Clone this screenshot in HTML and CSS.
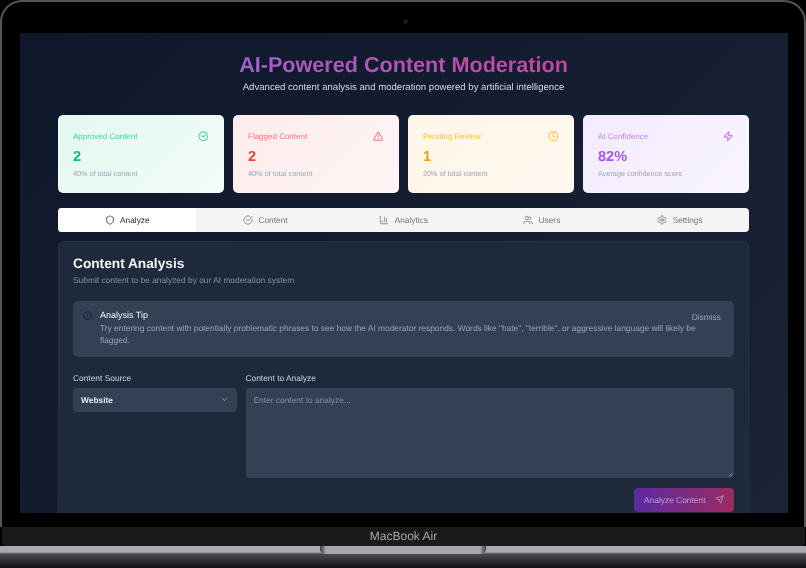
FILE: index.html
```html
<!DOCTYPE html>
<html lang="en">
<head>
<meta charset="utf-8">
<title>AI-Powered Content Moderation</title>
<link rel="stylesheet" href="styles.css">
</head>
<body>
<div class="laptop">
  <div class="lid">
    <span class="camera"></span>
    <main class="screen">
      <header class="hero">
        <h1>AI-Powered Content Moderation</h1>
        <p>Advanced content analysis and moderation powered by artificial intelligence</p>
      </header>
      <section class="stats">
        <article class="stat green">
          <div class="stat-head"><span>Approved Content</span>
            <svg viewBox="0 0 24 24"><path d="M21.8 10A10 10 0 1 1 17 3.3"/><path d="m9 11 3 3L22 4"/></svg></div>
          <strong>2</strong><small>40% of total content</small>
        </article>
        <article class="stat red">
          <div class="stat-head"><span>Flagged Content</span>
            <svg viewBox="0 0 24 24"><path d="m21.7 18-8-14a2 2 0 0 0-3.5 0l-8 14A2 2 0 0 0 4 21h16a2 2 0 0 0 1.7-3"/><path d="M12 9v4"/><path d="M12 17h.01"/></svg></div>
          <strong>2</strong><small>40% of total content</small>
        </article>
        <article class="stat amber">
          <div class="stat-head"><span>Pending Review</span>
            <svg viewBox="0 0 24 24"><circle cx="12" cy="12" r="10"/><path d="M12 6v6l4 2"/></svg></div>
          <strong>1</strong><small>20% of total content</small>
        </article>
        <article class="stat purple">
          <div class="stat-head"><span>AI Confidence</span>
            <svg viewBox="0 0 24 24"><path d="M4 14a1 1 0 0 1-.8-1.6l9.9-10.2a.5.5 0 0 1 .9.5l-1.9 6A1 1 0 0 0 13 10h7a1 1 0 0 1 .8 1.6l-9.9 10.2a.5.5 0 0 1-.9-.5l1.9-6A1 1 0 0 0 11 14z"/></svg></div>
          <strong>82%</strong><small>Average confidence score</small>
        </article>
      </section>
      <nav class="tabs">
        <div class="tab active"><svg viewBox="0 0 24 24"><path d="M20 13c0 5-3.5 7.500-7.700 9a1 1 0 0 1-.6 0C7.500 20.500 4 18 4 13V6a1 1 0 0 1 1-1c2 0 4.500-1.200 6.200-2.700a1.200 1.200 0 0 1 1.600 0C14.500 3.800 17 5 19 5a1 1 0 0 1 1 1z"/></svg>Analyze</div>
        <div class="tab"><svg viewBox="0 0 24 24"><path d="M21.8 10A10 10 0 1 1 17 3.300"/><path d="m9 11 3 3L22 4"/></svg>Content</div>
        <div class="tab"><svg viewBox="0 0 24 24"><path d="M3 3v16a2 2 0 0 0 2 2h16"/><path d="M8 17v-3"/><path d="M13 17V5"/><path d="M18 17V9"/></svg>Analytics</div>
        <div class="tab"><svg viewBox="0 0 24 24"><path d="M16 21v-2a4 4 0 0 0-4-4H6a4 4 0 0 0-4 4v2"/><circle cx="9" cy="7" r="4"/><path d="M22 21v-2a4 4 0 0 0-3-3.900"/><path d="M16 3.100a4 4 0 0 1 0 7.800"/></svg>Users</div>
        <div class="tab"><svg viewBox="0 0 24 24"><path d="M12.200 2h-.4a2 2 0 0 0-2 2v.2a2 2 0 0 1-1 1.700l-.4.300a2 2 0 0 1-2 0l-.2-.1a2 2 0 0 0-2.700.7l-.2.400a2 2 0 0 0 .7 2.700l.2.100a2 2 0 0 1 1 1.700v.5a2 2 0 0 1-1 1.700l-.2.100a2 2 0 0 0-.7 2.700l.2.400a2 2 0 0 0 2.700.7l.2-.1a2 2 0 0 1 2 0l.4.300a2 2 0 0 1 1 1.700v.2a2 2 0 0 0 2 2h.4a2 2 0 0 0 2-2v-.2a2 2 0 0 1 1-1.700l.4-.3a2 2 0 0 1 2 0l.2.100a2 2 0 0 0 2.700-.7l.2-.4a2 2 0 0 0-.7-2.700l-.2-.1a2 2 0 0 1-1-1.700v-.5a2 2 0 0 1 1-1.700l.2-.1a2 2 0 0 0 .7-2.700l-.2-.4a2 2 0 0 0-2.700-.7l-.2.100a2 2 0 0 1-2 0l-.4-.3a2 2 0 0 1-1-1.700V4a2 2 0 0 0-2-2z"/><circle cx="12" cy="12" r="3"/></svg>Settings</div>
      </nav>
      <section class="panel">
        <h2>Content Analysis</h2>
        <p class="lead">Submit content to be analyzed by our AI moderation system</p>
        <div class="tip">
          <svg viewBox="0 0 24 24"><circle cx="12" cy="12" r="10"/><path d="M12 16v-4"/><path d="M12 8h.01"/></svg>
          <div class="tip-body">
            <h3>Analysis Tip</h3>
            <p>Try entering content with potentially problematic phrases to see how the AI moderator responds. Words like "hate", "terrible", or aggressive language will likely be flagged.</p>
          </div>
          <span class="dismiss">Dismiss</span>
        </div>
        <div class="form">
          <div class="field source">
            <label>Content Source</label>
            <div class="select">Website<svg viewBox="0 0 24 24"><path d="m6 9 6 6 6-6"/></svg></div>
          </div>
          <div class="field grow">
            <label>Content to Analyze</label>
            <div class="textarea">Enter content to analyze...<svg viewBox="0 0 10 10"><path d="M9 3 3 9M9 6 6 9"/></svg></div>
          </div>
        </div>
        <div class="actions">
          <div class="button">Analyze Content<svg viewBox="0 0 24 24"><path d="M14.500 21.700a.5.5 0 0 0 .9 0l6.500-19a.5.5 0 0 0-.6-.6l-19 6.500a.5.5 0 0 0 0 .9l7.900 3.200a2 2 0 0 1 1.100 1.100z"/><path d="m21.900 2.100-10.900 10.900"/></svg></div>
        </div>
      </section>
    </main>
  </div>
  <div class="hinge">MacBook Air</div>
  <div class="base"><span class="notch"></span></div>
</div>
</body>
</html>
```

FILE: styles.css
```css
* { box-sizing: border-box; }
html, body { margin: 0; height: 568px; overflow: hidden; background: #000; }
body { font-family: "Liberation Sans", Arial, sans-serif; color: #fff; text-rendering: geometricPrecision; }
svg { fill: none; stroke: currentColor; stroke-width: 2; stroke-linecap: round; stroke-linejoin: round; flex: none; }

.laptop { width: 806px; height: 568px; display: flex; flex-direction: column; background: #000; filter: blur(.55px); }
.lid {
  position: relative; flex: none; height: 527px; padding: 31px 16px 14px 17.500px;
  background: #000; border: 2px solid #55565a; border-bottom: 0; border-radius: 22px 22px 0 0;
}
.camera { position: absolute; left: 401px; top: 17px; width: 5px; height: 5px; border-radius: 50%; background: #17181c; }
.screen { height: 480px; overflow: hidden; background: linear-gradient(135deg, #0f172a, #1a2436); padding: 19px 39px 0 38.500px; }

.hero { text-align: center; }
h1 { width: fit-content; margin: 0 auto; font-size: 21.600px; line-height: 26px; font-weight: 700; color: transparent; background: linear-gradient(90deg, #a460cc, #c2459f); background-clip: text; -webkit-background-clip: text; }
.hero p { margin: 3px 0 0; font-size: 9.600px; line-height: 14px; color: #d3d7de; }

.stats { display: grid; grid-template-columns: repeat(4, 165.750px); gap: 9.250px; margin-top: 20px; }
.stat { height: 77.500px; border-radius: 5px; padding: 15.500px 15px 0; display: flex; flex-direction: column; }
.stat-head { display: flex; justify-content: space-between; align-items: center; font-size: 8px; line-height: 12px; }
.stat-head svg { width: 10.500px; height: 10.500px; stroke-width: 2.300; }
.stat strong { font-size: 14.500px; line-height: 20px; margin-top: 4px; font-weight: 700; }
.stat small { font-size: 7.300px; line-height: 10px; margin-top: 2px; color: #9ca3b4; }
.green { background: linear-gradient(135deg, #e4f9f0, #f2fbf8); }
.green .stat-head { color: #3dd598; } .green strong { color: #10b981; }
.red { background: linear-gradient(135deg, #fdecec, #fff5f5); }
.red .stat-head { color: #f8717f; } .red strong { color: #ef4444; }
.amber { background: linear-gradient(135deg, #fef5e7, #fff9f0); }
.amber .stat-head { color: #fbbf3c; } .amber strong { color: #f59e0b; }
.purple { background: linear-gradient(135deg, #f3ebff, #f9f5ff); }
.purple .stat-head { color: #c084fc; } .purple strong { color: #a855f7; }

.tabs { display: grid; grid-template-columns: repeat(5, 1fr); height: 24px; margin-top: 15px; background: #f4f4f5; border-radius: 4px; overflow: hidden; }
.tab { display: flex; align-items: center; justify-content: center; gap: 5.500px; font-size: 8.300px; color: #71757f; }
.tab svg { width: 10px; height: 10px; stroke-width: 1.800; }
.tab.active { background: #fff; color: #22262e; }

.panel { margin-top: 9px; height: 300px; background: #1e293b; border: 1px solid #243044; border-radius: 5px 5px 0 0; padding: 13px 14px 0; }
h2 { margin: 0; font-size: 13.700px; line-height: 17px; font-weight: 700; color: #f1f5f9; }
.lead { margin: 2px 0 0; font-size: 8.400px; line-height: 12px; color: #8390a3; }
.tip { position: relative; display: flex; gap: 8px; margin-top: 15px; height: 56.500px; padding: 8px 10px; background: #334155; border-radius: 5px; }
.tip > svg { width: 9px; height: 9px; margin-top: 2px; color: #0f172a; }
.tip-body { flex: 1; }
h3 { margin: 0; font-size: 9px; line-height: 13px; font-weight: 400; color: #eef2f7; }
.tip-body p { margin: 0; font-size: 8.400px; line-height: 12.500px; color: #94a3b8; }
.dismiss { position: absolute; right: 13px; top: 11px; font-size: 8.400px; color: #94a3b8; }

.form { display: flex; gap: 9px; margin-top: 14.500px; }
.field label { display: block; font-size: 8.400px; line-height: 12px; color: #cbd5e1; }
.source { width: 163.500px; flex: none; }
.grow { flex: 1; }
.select { display: flex; align-items: center; justify-content: space-between; height: 24.500px; margin-top: 4px; padding: 0 8px; border-radius: 4px; background: #334155; font-size: 8.400px; font-weight: 700; color: #e2e8f0; }
.select svg { width: 9px; height: 9px; color: #94a3b8; }
.textarea { position: relative; height: 90.500px; margin-top: 4px; padding: 6px 8px; border-radius: 4px; background: #334155; font-size: 8.400px; line-height: 12px; color: #8390a3; }
.textarea svg { position: absolute; right: 1px; bottom: 1px; width: 6px; height: 6px; stroke-width: 1; color: #94a3b8; }
.actions { display: flex; justify-content: flex-end; margin-top: 10px; }
.button { display: flex; align-items: center; justify-content: space-between; height: 23.500px; width: 100px; padding: 0 10px; border-radius: 4px; background: linear-gradient(90deg, #5b2aa0, #9c2b63); font-size: 8.400px; color: #b9a6d6; white-space: nowrap; }
.button svg { width: 9px; height: 9px; stroke-width: 1.800; }

.hinge { flex: none; height: 19px; margin: 0 1px 0 2px; padding-top: 1px; background: #1a1a1c; border-radius: 0 0 4px 4px; text-align: center; font-size: 12px; line-height: 17px; color: #a5a6a9; }
.base { position: relative; flex: none; height: 22px; background: linear-gradient(180deg, #a9aaae 0, #a9aaae 6px, #4a4b50 8px, #26272c 17px, #101014 100%); }
.notch { position: absolute; left: 320px; top: 0; width: 166px; height: 8px; background: linear-gradient(90deg, #3a3b40, #a6a7ab 6px, #a6a7ab 160px, #3a3b40); border-radius: 0 0 5px 5px; }
```
